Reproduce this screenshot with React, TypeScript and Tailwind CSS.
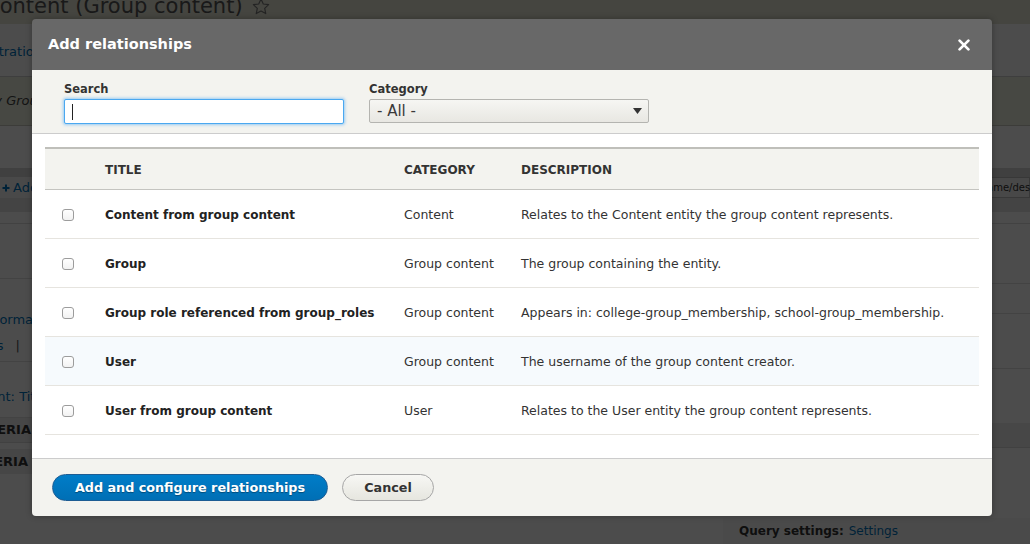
import React from 'react';

type Relationship = {
  title: string;
  category: string;
  description: string;
  hovered?: boolean;
};

const relationships: Relationship[] = [
  {
    title: 'Content from group content',
    category: 'Content',
    description: 'Relates to the Content entity the group content represents.',
  },
  {
    title: 'Group',
    category: 'Group content',
    description: 'The group containing the entity.',
  },
  {
    title: 'Group role referenced from group_roles',
    category: 'Group content',
    description: 'Appears in: college-group_membership, school-group_membership.',
  },
  {
    title: 'User',
    category: 'Group content',
    description: 'The username of the group content creator.',
    hovered: true,
  },
  {
    title: 'User from group content',
    category: 'User',
    description: 'Relates to the User entity the group content represents.',
  },
];

const StarOutline = () => (
  <svg width="18" height="17" viewBox="0 0 24 23" fill="none" stroke="#777" strokeWidth="1.6" strokeLinejoin="round">
    <path d="M12 1.5l3.1 6.6 7.2.9-5.3 5 1.4 7.1L12 17.6l-6.4 3.5 1.4-7.1-5.3-5 7.2-.9z" />
  </svg>
);

// the Views UI page that sits dimmed behind the dialog
const PageUnderneath = () => (
  <div className="flex h-full flex-col text-[13px] text-[#333]">
    <div className="h-[24px] overflow-hidden bg-[#e6e6d6]">
      <h1 className="-ml-[15px] -mt-[6px] flex items-center gap-[9px] whitespace-nowrap text-[21px] leading-[24px] text-[#555]">
        Content (Group content)
        <StarOutline />
      </h1>
    </div>

    <div className="flex h-[53px] items-center border-b border-[#d0d0d0] pt-[3px]">
      <div className="flex w-[42px] shrink-0 justify-end whitespace-nowrap text-[#0074bd]">Administration</div>
    </div>

    <div className="flex h-[49px] items-center border-b border-[#c8c8c0] bg-[#edf0df]">
      <div className="flex w-[46px] shrink-0 justify-end whitespace-nowrap italic text-[#444]">Displaying content by Group</div>
    </div>

    <div className="h-[42px] shrink-0" />
    <div className="h-[9px] shrink-0 bg-[#d6d6d6]" />

    <div className="flex h-[21px] shrink-0 items-center justify-between bg-[#f6f6f6]">
      <span className="flex items-center gap-[3px] whitespace-nowrap pl-[2px] text-[13px] text-[#0074bd]">
        <svg width="8" height="8" viewBox="0 0 8 8">
          <path d="M4 0.5v7M0.5 4h7" stroke="#0074bd" strokeWidth="2" />
        </svg>
        Add
      </span>
      <div className="h-full w-[107px] shrink-0 overflow-hidden">
        <span className="flex h-full items-center whitespace-nowrap border border-[#bdbdbd] bg-[#f0f0f0] pl-[8px] text-[10px] text-[#333]">
          Edit view name/description
        </span>
      </div>
    </div>

    <div className="h-[14px] shrink-0 bg-[#e4e4e4]" />
    <div className="h-[12px] shrink-0 border-b border-[#dedede]" />

    <div className="flex flex-1">
      <div className="flex w-[723px] flex-col">
        <div className="h-[55px] border-b border-[#e2e2e2]" />
        <div className="h-[30px]" />
        <div className="flex h-[22px] items-center">
          <div className="flex w-[58px] justify-end whitespace-nowrap text-[#0074bd]">Information</div>
        </div>
        <div className="flex h-[31px] items-start border-b border-[#e2e2e2] pt-[5px]">
          <div className="flex w-[57px] justify-end gap-[12px] whitespace-nowrap text-[#0074bd]">
            <span>Settings</span>
            <span className="text-[#555]">|</span>
            <span>Edit</span>
          </div>
        </div>
        <div className="h-[24px]" />
        <div className="flex h-[22px] items-center">
          <div className="flex w-[47px] justify-end whitespace-nowrap text-[#0074bd]">Content: Title</div>
        </div>
        <div className="h-[10px] border-b border-[#e2e2e2]" />
        <div className="flex h-[25px] items-center border-b border-[#dadada] bg-[#ededed]">
          <div className="flex w-[31px] justify-end whitespace-nowrap font-bold uppercase text-[#333]">Filter criteria</div>
        </div>
        <div className="h-[6px]" />
        <div className="flex h-[25px] items-center bg-[#e9e9e9]">
          <div className="flex w-[28px] justify-end whitespace-nowrap font-bold uppercase text-[#333]">Sort criteria</div>
        </div>
      </div>
      <div className="flex flex-1 flex-col">
        <div className="h-[60px] border-b border-[#e2e2e2]" />
        <div className="h-[30px] border-b border-[#e2e2e2]" />
        <div className="h-[55px] border-b border-[#e2e2e2]" />
        <div className="h-[54px]" />
        <div className="h-[25px] border-b border-[#dadada] bg-[#ededed]" />
        <div className="h-[70px]" />
        <div className="flex flex-1 items-center bg-[#f8f8f8] pl-[16px] text-[12px]">
          <span className="font-bold text-[#333]">Query settings:</span>
          <span className="ml-[5px] text-[#0074bd]">Settings</span>
        </div>
      </div>
    </div>
  </div>
);

const AddRelationshipsDialog = () => (
  <div className="absolute left-[32px] top-[19px] w-[960px] overflow-hidden rounded-[4px] shadow-[0_0_6px_rgba(0,0,0,0.3)]">
    {/* Title bar */}
    <div className="flex h-[51px] items-center justify-between bg-[#686868] pl-[16px] pr-[22px]">
      <h2 className="text-[14.5px] font-bold text-white">Add relationships</h2>
      <button aria-label="Close" className="block">
        <svg width="12" height="12" viewBox="0 0 12 12">
          <path d="M1.6 1.6l8.8 8.8M10.4 1.6l-8.8 8.8" stroke="white" strokeWidth="2.7" strokeLinecap="round" />
        </svg>
      </button>
    </div>

    {/* Filters */}
    <div className="flex h-[64px] gap-[25px] border-b border-[#cccccc] bg-[#f3f3ef] pl-[32px] pt-[10px]">
      <div className="flex flex-col">
        <label className="text-[11.5px] font-bold leading-[18px] text-[#333]">Search</label>
        <div className="relative mt-[1px] h-[25px] w-[280px] rounded-[2px] border border-[#4aa8f0] bg-white shadow-[0_0_3px_1px_rgba(80,170,245,0.55)]">
          <span className="absolute left-[7px] top-[4px] h-[16px] w-px bg-[#222]" />
        </div>
      </div>
      <div className="flex flex-col">
        <label className="text-[11.5px] font-bold leading-[18px] text-[#333]">Category</label>
        <div className="mt-[1px] flex h-[24px] w-[280px] items-center justify-between rounded-[2px] border border-[#b4b4b0] bg-gradient-to-b from-[#f6f6f3] to-[#e8e7e2] pl-[7px] pr-[6px]">
          <span className="pt-[1px] text-[15px] leading-none text-[#3a3a3a]">- All -</span>
          <svg width="9" height="6" viewBox="0 0 9 6">
            <path d="M0 0h9L4.5 6z" fill="#333" />
          </svg>
        </div>
      </div>
    </div>

    {/* Table */}
    <div className="bg-white px-[13px] pb-[23px] pt-[13px]">
      <div className="grid h-[43px] grid-cols-[48px_299px_117px_1fr] items-center border-b border-t-2 border-b-[#c4c4c0] border-t-[#bfbfba] bg-[#f3f3ef] pt-[2px] text-[12px] font-bold uppercase text-[#333]">
        <span />
        <span className="pl-[12px]">Title</span>
        <span className="pl-[12px]">Category</span>
        <span className="pl-[12px]">Description</span>
      </div>
      {relationships.map((r) => (
        <div
          key={r.title}
          className={`grid h-[49px] grid-cols-[48px_299px_117px_1fr] items-center border-b border-[#e6e4df] pt-[2px] ${
            r.hovered ? 'bg-[#f6fafd]' : 'bg-white'
          }`}
        >
          <span className="pl-[17px]">
            <input
              type="checkbox"
              aria-label={r.title}
              className="m-0 block h-[12px] w-[12px] appearance-none rounded-[3px] border border-[#9c9c9c] bg-gradient-to-b from-white to-[#f2f2f2]"
            />
          </span>
          <span className="whitespace-nowrap pl-[12px] text-[12px] font-bold text-[#222]">{r.title}</span>
          <span className="whitespace-nowrap pl-[12px] text-[12.5px] text-[#333]">{r.category}</span>
          <span className="whitespace-nowrap pl-[12px] text-[12.5px] text-[#333]">{r.description}</span>
        </div>
      ))}
    </div>

    {/* Actions */}
    <div className="flex h-[58px] items-start gap-[14px] border-t border-[#cccccc] bg-[#f3f3ef] pl-[20px] pt-[15px]">
      <button className="flex h-[27px] w-[276px] items-center justify-center rounded-full border border-[#1d5c93] bg-gradient-to-b from-[#007dc8] to-[#006fb5] text-[12.75px] font-bold text-white [text-shadow:0_1px_1px_rgba(0,0,0,0.35)]">
        Add and configure relationships
      </button>
      <button className="flex h-[27px] w-[92px] items-center justify-center rounded-full border border-[#a6a6a6] bg-gradient-to-b from-[#f7f7f4] to-[#e6e6df] text-[12.75px] font-bold text-[#333]">
        Cancel
      </button>
    </div>
  </div>
);

export default function App() {
  return (
    <div className="relative h-[544px] w-[1030px] overflow-hidden bg-white font-['DejaVu_Sans',sans-serif]">
      <PageUnderneath />
      <div className="absolute inset-0 bg-black/70" />
      <AddRelationshipsDialog />
    </div>
  );
}
